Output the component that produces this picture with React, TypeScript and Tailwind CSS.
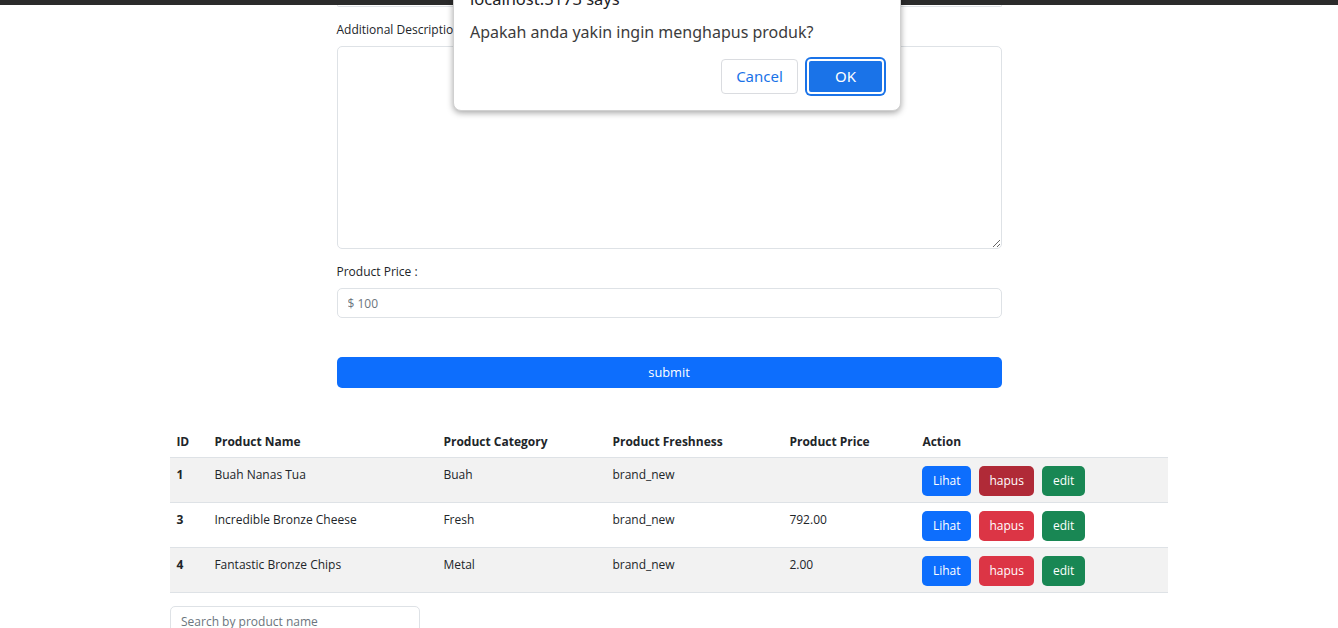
import React from "react";

const rows = [
  { id: "1", name: "Buah Nanas Tua", cat: "Buah", fresh: "brand_new", price: "", striped: true, hover: true },
  { id: "3", name: "Incredible Bronze Cheese", cat: "Fresh", fresh: "brand_new", price: "792.00", striped: false, hover: false },
  { id: "4", name: "Fantastic Bronze Chips", cat: "Metal", fresh: "brand_new", price: "2.00", striped: true, hover: false },
];

export default function App() {
  return (
    <div className="relative min-h-[628px] bg-white text-[#212529] text-[12.8px] leading-[19.2px] overflow-hidden" style={{ fontFamily: '"Open Sans", "Noto Sans", sans-serif' }}>
      <div className="h-[5px] bg-[#2b2b2b]" />
      <div className="mx-auto w-[665px]">
        <div className="h-[2px] border border-t-0 border-[#dee2e6] rounded-b-[5px]" />
        <label className="block mt-[13px] mb-[7px] text-[12px]">Additional Description :</label>
        <textarea className="block w-full h-[203px] border border-[#dee2e6] rounded-[5px] resize-y outline-none" />
        <label className="block mt-[13px] mb-[7px] text-[12px]">Product Price :</label>
        <input className="block w-full h-[30px] border border-[#dee2e6] rounded-[5px] px-[10px] text-[12px] placeholder-[#6c757d] outline-none" placeholder="$ 100" />
        <button className="block mt-[39px] w-full h-[31px] bg-[#0d6efd] text-white rounded-[5px] text-[12.8px]">submit</button>
      </div>
      <div className="mx-auto w-[998px] mt-[37px]">
        <table className="w-full table-fixed border-collapse text-left">
          <thead>
            <tr className="border-b border-[#dee2e6]">
              <th className="w-[38px] px-[6.4px] py-[6.4px] font-bold text-[12px]">ID</th>
              <th className="w-[229px] px-[6.4px] py-[6.4px] font-bold text-[12px]">Product Name</th>
              <th className="w-[169px] px-[6.4px] py-[6.4px] font-bold text-[12px]">Product Category</th>
              <th className="w-[177px] px-[6.4px] py-[6.4px] font-bold text-[12px]">Product Freshness</th>
              <th className="w-[133px] px-[6.4px] py-[6.4px] font-bold text-[12px]">Product Price</th>
              <th className="px-[6.4px] py-[6.4px] font-bold text-[12px]">Action</th>
            </tr>
          </thead>
          <tbody>
            {rows.map((r) => (
              <tr key={r.id} className={`border-b border-[#dee2e6] ${r.striped ? "bg-[#f2f2f2]" : "bg-white"}`}>
                <td className="align-top px-[6.4px] pt-[6.4px] font-bold text-[12px]">{r.id}</td>
                <td className="align-top px-[6.4px] pt-[6.4px] text-[12px]">{r.name}</td>
                <td className="align-top px-[6.4px] pt-[6.4px] text-[12px]">{r.cat}</td>
                <td className="align-top px-[6.4px] pt-[6.4px] text-[12px]">{r.fresh}</td>
                <td className="align-top px-[6.4px] pt-[6.4px] text-[12px]">{r.price}</td>
                <td className="align-top px-[6.4px] pt-[7.6px] pb-[6.4px]">
                  <div className="flex gap-[8px]">
                    <button className="h-[30px] px-[10.5px] rounded-[5px] bg-[#0d6efd] text-white text-[12px]">Lihat</button>
                    <button className={`h-[30px] px-[10.5px] rounded-[5px] text-white text-[12px] ${r.hover ? "bg-[#b02a37]" : "bg-[#dc3545]"}`}>hapus</button>
                    <button className="h-[30px] px-[10.5px] rounded-[5px] bg-[#198754] text-white text-[12px]">edit</button>
                  </div>
                </td>
              </tr>
            ))}
          </tbody>
        </table>
        <input className="block mt-[13px] w-[250px] h-[30px] border border-[#dee2e6] rounded-[5px] px-[10px] text-[12px] placeholder-[#6c757d] outline-none" placeholder="Search by product name" />
      </div>

      <div className="absolute left-[453px] top-[-30px] w-[448px] h-[141px] bg-white rounded-[8px] shadow-[0_2px_6px_rgba(0,0,0,0.35)] border border-[#d0d0d0] px-[16px]" style={{ fontFamily: '"Noto Sans", sans-serif' }}>
        <div className="mt-[17px] text-[16.5px] leading-[22px] text-[#202124]">localhost:5173 says</div>
        <div className="mt-[11px] text-[16px] leading-[22px] text-[#3c3c3c]">Apakah anda yakin ingin menghapus produk?</div>
        <div className="mt-[16px] flex justify-end gap-[9px]">
          <button className="w-[77px] h-[35px] rounded-[4px] border border-[#dadce0] bg-white text-[#1a73e8] text-[15px]">Cancel</button>
          <button className="w-[77px] h-[35px] rounded-[4px] bg-[#1a73e8] text-white text-[15px] ring-2 ring-[#1a73e8] border-2 border-white">OK</button>
        </div>
      </div>
    </div>
  );
}
